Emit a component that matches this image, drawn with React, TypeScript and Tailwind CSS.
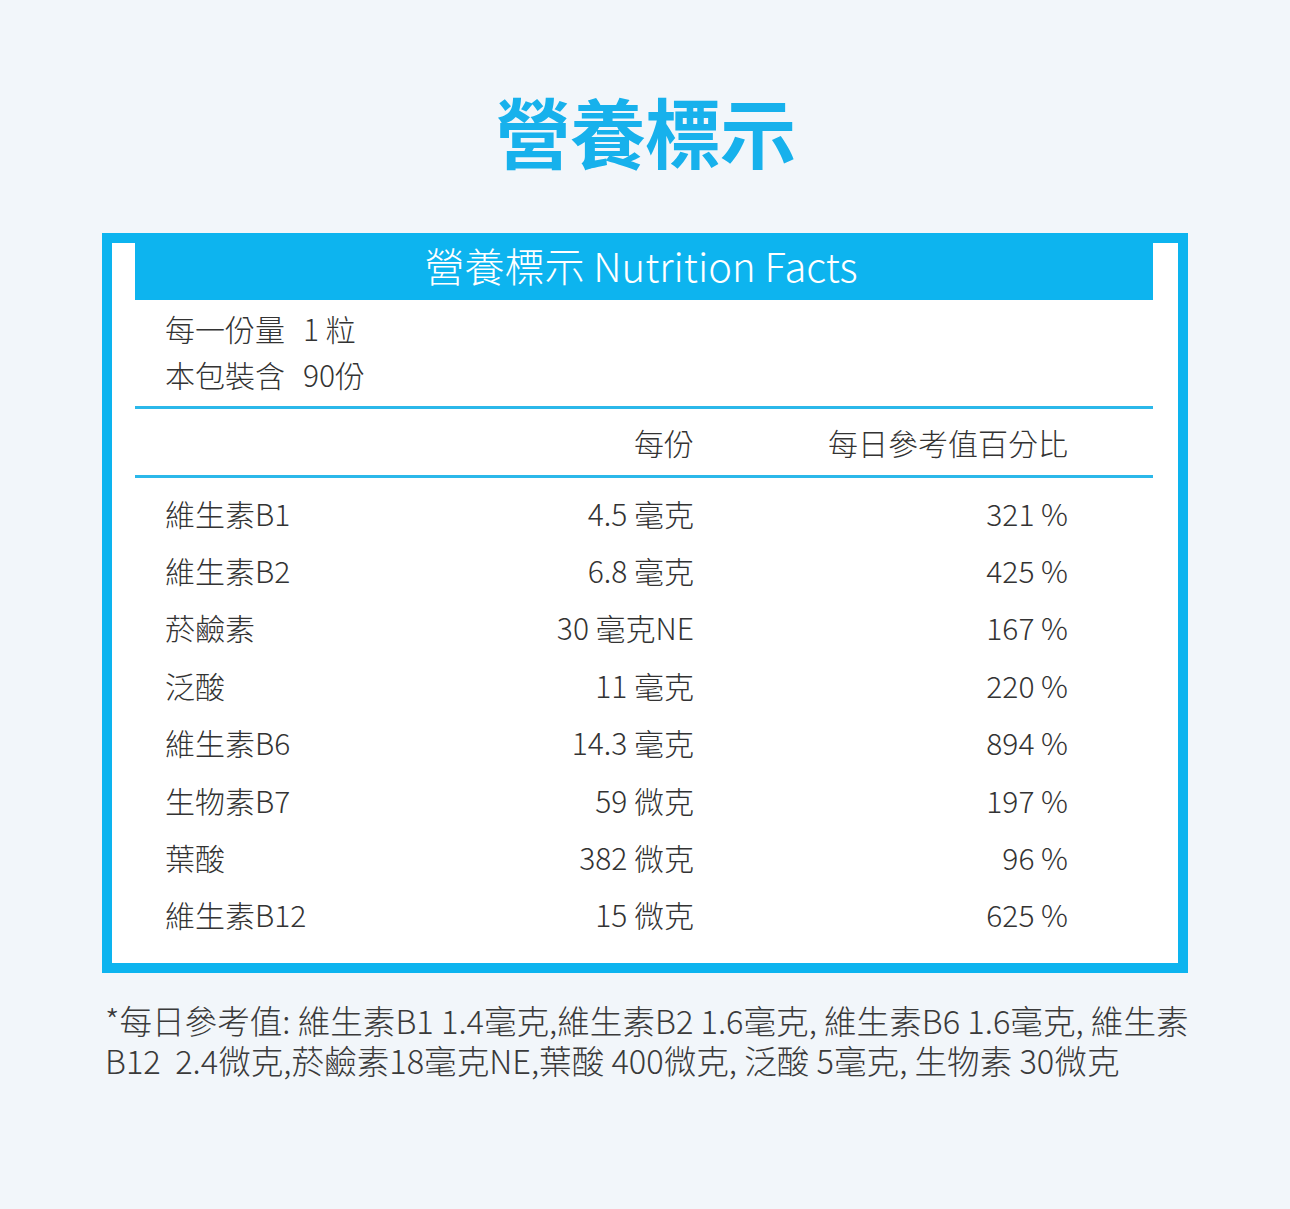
import React from "react"

const font = { fontFamily: '"Noto Sans CJK TC", "Noto Sans", sans-serif' }

const rows = [
    { name: "維生素B1", amount: "4.5 毫克", pct: "321 %" },
    { name: "維生素B2", amount: "6.8 毫克", pct: "425 %" },
    { name: "菸鹼素", amount: "30 毫克NE", pct: "167 %" },
    { name: "泛酸", amount: "11 毫克", pct: "220 %" },
    { name: "維生素B6", amount: "14.3 毫克", pct: "894 %" },
    { name: "生物素B7", amount: "59 微克", pct: "197 %" },
    { name: "葉酸", amount: "382 微克", pct: "96 %" },
    { name: "維生素B12", amount: "15 微克", pct: "625 %" },
]

export default function App() {
    return (
        <div
            className="min-h-[1209px] w-[1290px] bg-[#f2f6fa] flex flex-col items-center"
            style={font}
        >
            <h1 className="mt-[92px] text-[76px] leading-none font-bold text-[#17b1ec] tracking-[-1px]">
                營養標示
            </h1>

            <div className="mt-[65px] w-[1086px] h-[740px] border-[10px] border-[#0db4ef] bg-white px-[23px] pr-[25px] flex flex-col">
                <div className="h-[57px] bg-[#0db4ef] flex items-center justify-center text-white text-[40px] font-light leading-none pb-[14px] pr-[6px]">
                    營養標示 Nutrition Facts
                </div>

                <div className="pl-[30px] pt-[5px] text-[30px] font-light leading-[46px] text-[#333]">
                    <div className="flex">
                        <span className="w-[138px]">每一份量</span>
                        <span>1 粒</span>
                    </div>
                    <div className="flex">
                        <span className="w-[138px]">本包裝含</span>
                        <span>90份</span>
                    </div>
                </div>

                <div className="mt-[9px] h-[3px] bg-[#2bb8ea]" />

                <div className="grid grid-cols-[297px_232px_374px] pl-[30px] h-[66px] items-center text-[30px] font-light text-[#333] leading-none">
                    <span />
                    <span className="text-right">每份</span>
                    <span className="text-right">每日參考值百分比</span>
                </div>

                <div className="h-[3px] bg-[#2bb8ea]" />

                <div className="pt-[6px] flex flex-col">
                    {rows.map((r) => (
                        <div
                            key={r.name}
                            className="grid grid-cols-[297px_232px_374px] pl-[30px] h-[57.4px] items-center text-[30px] font-light text-[#333] leading-none"
                        >
                            <span>{r.name}</span>
                            <span className="text-right">{r.amount}</span>
                            <span className="text-right">{r.pct}</span>
                        </div>
                    ))}
                </div>
            </div>

            <p className="mt-[27px] w-[1086px] pl-[3px] text-[32.6px] font-light leading-[40px] text-[#3a3a3a] whitespace-nowrap">
                *每日參考值: 維生素B1 1.4毫克,維生素B2 1.6毫克, 維生素B6 1.6毫克, 維生素
                <br />
                B12&nbsp; 2.4微克,菸鹼素18毫克NE,葉酸 400微克, 泛酸 5毫克, 生物素 30微克
            </p>
        </div>
    )
}
